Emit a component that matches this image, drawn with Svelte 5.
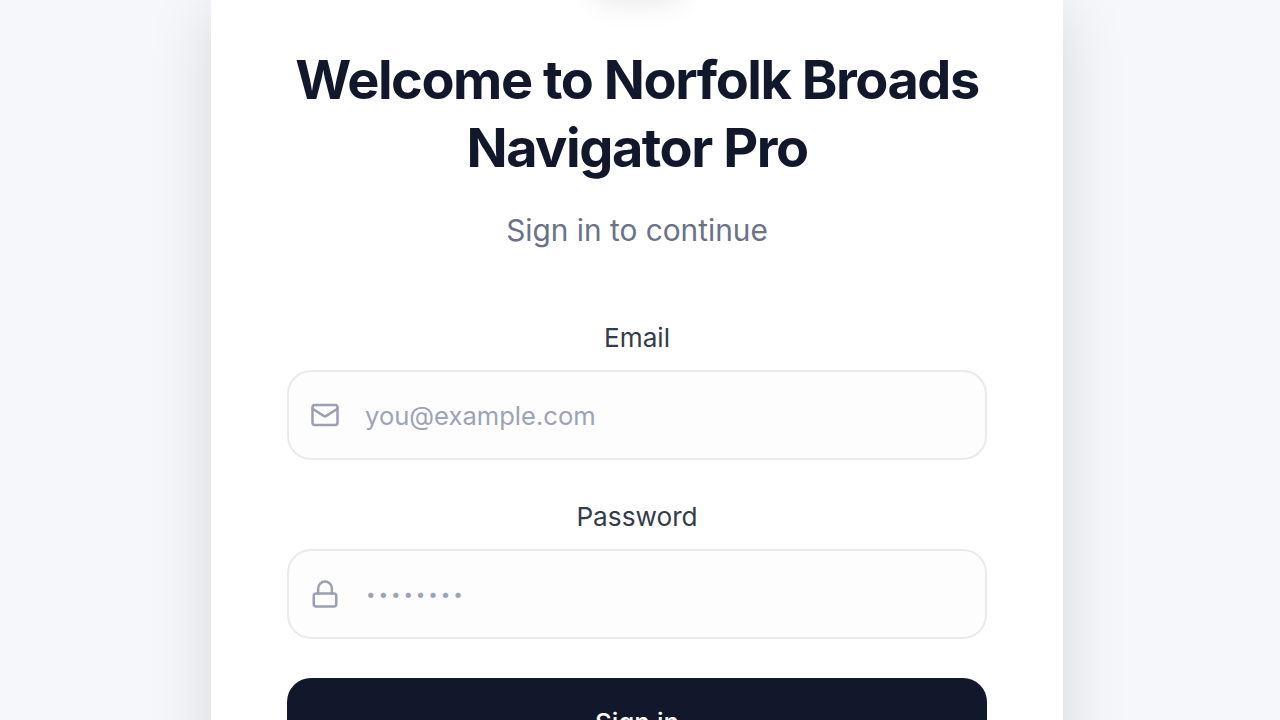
<script lang="ts">
    let email = $state('')
    let password = $state('')
</script>

<main class="page">
    <section class="card">
        <div class="logo"></div>
        <h1>Welcome to Norfolk Broads Navigator Pro</h1>
        <p class="subtitle">Sign in to continue</p>

        <form class="form" onsubmit={(e) => e.preventDefault()}>
            <div class="field">
                <label for="email">Email</label>
                <div class="input-wrap">
                    <svg class="icon" viewBox="0 0 24 24" fill="none" stroke="currentColor" stroke-width="2" stroke-linecap="round" stroke-linejoin="round">
                        <rect x="2" y="4" width="20" height="16" rx="2" />
                        <path d="M22 7l-8.97 5.7a1.94 1.94 0 0 1-2.06 0L2 7" />
                    </svg>
                    <input id="email" type="email" placeholder="you@example.com" bind:value={email} />
                </div>
            </div>

            <div class="field">
                <label for="password">Password</label>
                <div class="input-wrap">
                    <svg class="icon" viewBox="0 0 24 24" fill="none" stroke="currentColor" stroke-width="2" stroke-linecap="round" stroke-linejoin="round">
                        <rect x="3" y="11.5" width="18" height="10.5" rx="2" />
                        <path d="M6.5 11.5V7.5a5.5 5.5 0 0 1 11 0v4" />
                    </svg>
                    <input id="password" class="secret" type="password" placeholder="••••••••" bind:value={password} />
                </div>
            </div>

            <button type="submit">Sign in</button>
        </form>
    </section>
</main>

<style>
    :global(body) {
        margin: 0;
        height: 720px;
        overflow: hidden;
        background: #f5f7fb;
        font-family: Inter, "Liberation Sans", sans-serif;
    }

    .page {
        display: flex;
        justify-content: center;
        height: 720px;
        overflow: hidden;
        padding-right: 6px;
    }

    .card {
        flex: 0 0 852px;
        box-sizing: border-box;
        height: 900px;
        padding: 0 76px;
        background: #fff;
        box-shadow: 0 10px 60px rgba(0, 0, 0, 0.13);
        text-align: center;
    }

    .logo {
        width: 96px;
        height: 96px;
        margin: -102px auto 52px;
        border-radius: 24px;
        background: #fff;
        box-shadow: 0 8px 30px rgba(17, 24, 39, 0.1);
    }

    h1 {
        margin: 0;
        font-size: 54px;
        line-height: 68px;
        font-weight: 700;
        letter-spacing: -1.45px;
        color: #12182b;
    }

    .subtitle {
        margin: 26px 0 0;
        font-size: 29.8px;
        line-height: 44px;
        color: #6a7287;
    }

    .form {
        display: flex;
        flex-direction: column;
        gap: 37.5px;
        margin-top: 67px;
    }

    .field {
        display: flex;
        flex-direction: column;
        gap: 13px;
    }

    label {
        font-size: 26.2px;
        line-height: 38px;
        font-weight: 400;
        color: #343b4d;
    }

    .input-wrap {
        display: flex;
        align-items: center;
        gap: 25px;
        height: 90px;
        box-sizing: border-box;
        padding: 0 21px;
        border: 2px solid #e9eaed;
        border-radius: 24px;
        background: #fdfdfe;
    }

    .icon {
        flex: none;
        width: 30px;
        height: 30px;
        color: #9a9fb2;
    }

    input {
        flex: 1;
        min-width: 0;
        border: 0;
        padding: 0;
        outline: 0;
        background: transparent;
        font: inherit;
        font-size: 25.6px;
        color: #111827;
    }

    input::placeholder {
        color: #9ca3b4;
        opacity: 1;
    }

    .secret {
        padding: 0 0 7px 1px;
    }

    .secret::placeholder {
        font-size: 17px;
        letter-spacing: 2.9px;
    }

    button {
        height: 88px;
        margin-top: 2px;
        border: 0;
        border-radius: 24px;
        background: #12182b;
        color: #fff;
        font: inherit;
        font-size: 26px;
        font-weight: 500;
    }
</style>
